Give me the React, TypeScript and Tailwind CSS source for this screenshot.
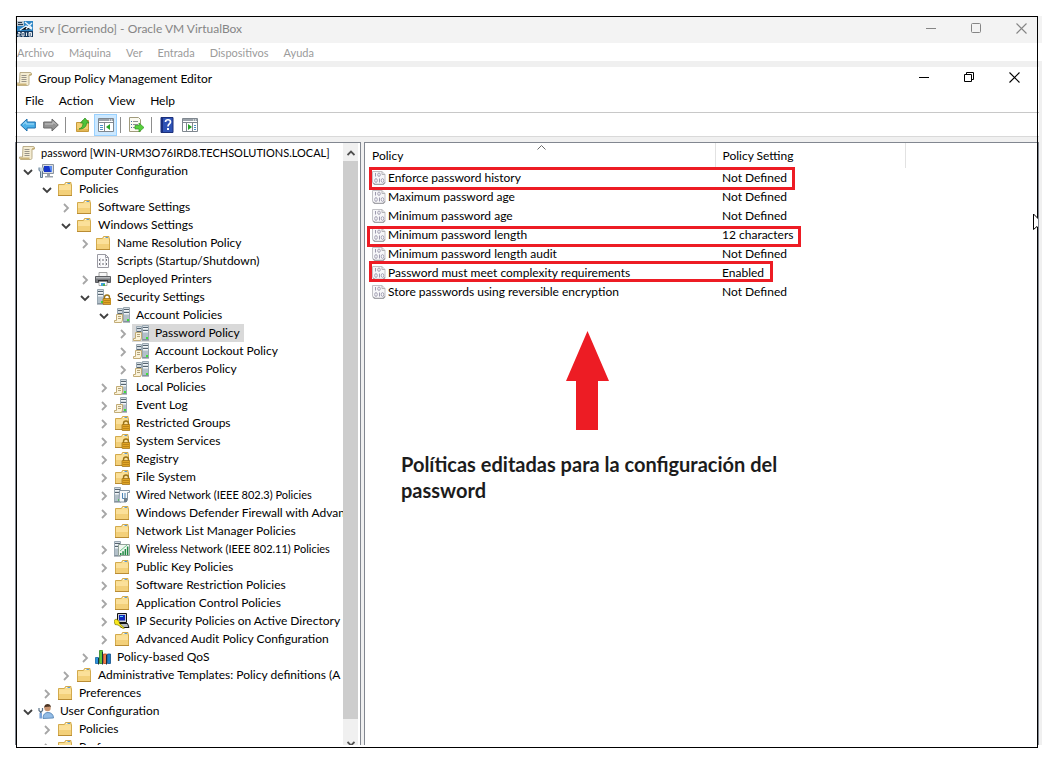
import React, { useState } from "react";

type IconName =
  | "scroll"
  | "computer"
  | "folder"
  | "script"
  | "printer"
  | "security"
  | "accounts"
  | "local"
  | "locked"
  | "wired"
  | "wireless"
  | "ipsec"
  | "qos"
  | "user";

type Node = {
  label: string;
  icon: IconName;
  state?: "open" | "closed";
  selected?: boolean;
  compact?: boolean;
  children?: Node[];
};

const tree: Node[] = [
  {
    label: "Computer Configuration",
    icon: "computer",
    state: "open",
    children: [
      {
        label: "Policies",
        icon: "folder",
        state: "open",
        children: [
          { label: "Software Settings", icon: "folder", state: "closed" },
          {
            label: "Windows Settings",
            icon: "folder",
            state: "open",
            children: [
              { label: "Name Resolution Policy", icon: "folder", state: "closed" },
              { label: "Scripts (Startup/Shutdown)", icon: "script" },
              { label: "Deployed Printers", icon: "printer", state: "closed" },
              {
                label: "Security Settings",
                icon: "security",
                state: "open",
                children: [
                  {
                    label: "Account Policies",
                    icon: "accounts",
                    state: "open",
                    children: [
                      { label: "Password Policy", icon: "accounts", state: "closed", selected: true },
                      { label: "Account Lockout Policy", icon: "accounts", state: "closed" },
                      { label: "Kerberos Policy", icon: "accounts", state: "closed" },
                    ],
                  },
                  { label: "Local Policies", icon: "local", state: "closed" },
                  { label: "Event Log", icon: "local", state: "closed" },
                  { label: "Restricted Groups", icon: "locked", state: "closed" },
                  { label: "System Services", icon: "locked", state: "closed" },
                  { label: "Registry", icon: "locked", state: "closed" },
                  { label: "File System", icon: "locked", state: "closed" },
                  { label: "Wired Network (IEEE 802.3) Policies", icon: "wired", state: "closed", compact: true },
                  { label: "Windows Defender Firewall with Advan", icon: "folder", state: "closed" },
                  { label: "Network List Manager Policies", icon: "folder" },
                  { label: "Wireless Network (IEEE 802.11) Policies", icon: "wireless", state: "closed", compact: true },
                  { label: "Public Key Policies", icon: "folder", state: "closed" },
                  { label: "Software Restriction Policies", icon: "folder", state: "closed" },
                  { label: "Application Control Policies", icon: "folder", state: "closed" },
                  { label: "IP Security Policies on Active Directory", icon: "ipsec", state: "closed" },
                  { label: "Advanced Audit Policy Configuration", icon: "folder", state: "closed" },
                ],
              },
              { label: "Policy-based QoS", icon: "qos", state: "closed" },
            ],
          },
          { label: "Administrative Templates: Policy definitions (A", icon: "folder", state: "closed" },
        ],
      },
      { label: "Preferences", icon: "folder", state: "closed" },
    ],
  },
  {
    label: "User Configuration",
    icon: "user",
    state: "open",
    children: [
      { label: "Policies", icon: "folder", state: "closed" },
      { label: "Preferences", icon: "folder", state: "closed" },
    ],
  },
];

const policies = [
  ["Enforce password history", "Not Defined"],
  ["Maximum password age", "Not Defined"],
  ["Minimum password age", "Not Defined"],
  ["Minimum password length", "12 characters"],
  ["Minimum password length audit", "Not Defined"],
  ["Password must meet complexity requirements", "Enabled"],
  ["Store passwords using reversible encryption", "Not Defined"],
];

const FolderShape = () => (
  <>
    <path d="M1.500 3.500h6l1-2h5.500v2h.5v11h-13z" fill="#f8dc8c" stroke="#d3aa4c" />
    <path d="M2 4.500h12V9H2z" fill="#fbe09a" />
    <path d="M2 9h12v5H2z" fill="#f3d07a" />
    <path d="M9 2.500h4" stroke="#fff7df" />
    <path d="M10.500 2.500h2.500" stroke="#5b9bd5" />
    <path d="M1 14.500h14" stroke="#b98c34" />
  </>
);

const Lock = () => (
  <>
    <path d="M9.500 10V8.500a2.500 2.500 0 0 1 5 0V10" fill="none" stroke="#9a7418" strokeWidth="1.400" />
    <rect x="8" y="9.500" width="8" height="6" rx=".6" fill="#e0a526" stroke="#9a6a10" strokeWidth=".7" />
    <path d="M9 11.500h6M9 13.500h6" stroke="#b47c14" strokeWidth=".8" />
  </>
);

const Server = ({ x }: { x: number }) => (
  <g transform={`translate(${x} 0)`}>
    <path d="M.5.5h6v14h-6z" fill="#d3dbe1" stroke="#9aa8b2" />
    <path d="M1 2.500h5M1 5.500h5" stroke="#566470" />
    <path d="M1 3.500h5M1 6.500h5" stroke="#f2f6f8" />
    <path d="M1 8h5v6H1z" fill="#b3c0c9" />
    <path d="M0 15h7" stroke="#6f7d88" />
    <path d="M4 12h2v2H4z" fill="#3ce03a" />
  </g>
);

const MiniScroll = () => (
  <>
    <path d="M2.500 7.500h6v5.500l-1 2.500h-7v-2h2z" fill="#fbf3da" stroke="#c2ac76" />
    <path d="M4 9.500h3M4 11.500h3" stroke="#b3a47c" />
  </>
);

function Icon({ name }: { name: IconName }) {
  let art: React.ReactNode = null;
  switch (name) {
    case "scroll":
      art = (
        <>
          <path d="M4 1.500h10.500c.8 0 1 .8 1 1.500v1H13v8.500c0 1.500-.5 2-1.500 2H2c-1 0-1.500-1-1.500-2.500h3z" fill="#f4ecd2" stroke="#b3a680" strokeWidth=".9" />
          <path d="M13 4h2V2.500" stroke="#c2a96a" fill="#d8c48c" />
          <path d="M1 12.500h9.500v2H2c-.7 0-1-.8-1-2z" fill="#cbb47a" />
          <path d="M5.500 4.500h5M5.500 6.500h5M5.500 8.500h5M5.500 10.500h5" stroke="#8f8a80" strokeWidth=".9" />
        </>
      );
      break;
    case "computer":
      art = (
        <>
          <path d="M4.500 1.500h11v9h-11z" fill="#d9dde2" stroke="#8b949e" />
          <path d="M6 3h8v6H6z" fill="#1636c9" />
          <path d="M11 3h3v6h-1z" fill="#5b8cf0" />
          <path d="M9 11h3v2H9zM7 13h8v1.500H7z" fill="#9aa3ad" />
          <path d="M1 4.500v3l1.500 1v6h2v-6l1-1v-3" fill="#c7d6e2" stroke="#5d7890" />
        </>
      );
      break;
    case "folder":
      art = <FolderShape />;
      break;
    case "script":
      art = (
        <>
          <path d="M2.500 1.500h8l3 3v10h-11z" fill="#fbfbfd" stroke="#9a9aa2" />
          <path d="M10.500 1.500v3h3" fill="none" stroke="#9a9aa2" />
          <path d="M5.500 6l-1.500 1 1.500 1M10.500 6L12 7l-1.500 1M7 7h2M5.500 10L4 11l1.500 1M10.500 10l1.500 1-1.500 1M7 11h2" fill="none" stroke="#55555f" strokeWidth=".9" />
        </>
      );
      break;
    case "printer":
      art = (
        <>
          <path d="M4 1.500h8V6H4z" fill="#f7f7f7" stroke="#8d8d8d" strokeWidth=".8" />
          <path d="M0.500 5.500h15v6h-15z" fill="#77797d" stroke="#5d5f63" />
          <path d="M1 6h14v1.500H1z" fill="#b6b8bb" />
          <path d="M3 9h10v2H3z" fill="#2d2e31" />
          <path d="M4 10.500h8v4H4z" fill="#fff" stroke="#8d8d8d" strokeWidth=".7" />
          <path d="M6 12h4v3H6z" fill="#42a3dc" />
          <path d="M8 13h2v2H8z" fill="#4caf50" />
        </>
      );
      break;
    case "security":
      art = (
        <>
          <Server x={2} />
          <Lock />
        </>
      );
      break;
    case "accounts":
      art = (
        <>
          <path d="M3.500 1.500h5v11h-5z" fill="#d3dbe1" stroke="#9aa8b2" />
          <path d="M4 3.500h4M4 6.500h4" stroke="#566470" />
          <Server x={9} />
          <MiniScroll />
        </>
      );
      break;
    case "local":
      art = (
        <>
          <Server x={6} />
          <MiniScroll />
        </>
      );
      break;
    case "locked":
      art = (
        <>
          <FolderShape />
          <Lock />
        </>
      );
      break;
    case "wired":
      art = (
        <>
          <Server x={0} />
          <path d="M5.500 3.500h10v2h-2v7.500l-1.500 2H6.500l-1.500-1z" fill="#f6f8fa" stroke="#8494a2" />
          <path d="M8.500 6v5.500M8.500 11.500h2.500M11 6v5.500" stroke="#4d85b5" fill="none" />
          <path d="M10 11h3v4h-3z" fill="#6f7f8b" />
        </>
      );
      break;
    case "wireless":
      art = (
        <>
          <Server x={0} />
          <path d="M4.500 3.500h11v11h-11z" fill="#f0f6f0" stroke="#93a39a" />
          <path d="M6 12h1.500v2H6zM8.300 10.300h1.500V14H8.300zM10.600 8h1.500v6h-1.500zM12.900 5.500h1.500V14h-1.500z" fill="#1f8a44" />
          <path d="M6 10l7-6" stroke="#6fc38a" />
        </>
      );
      break;
    case "ipsec":
      art = (
        <>
          <path d="M3.500.5h9v9h-9z" fill="#c9ccd2" stroke="#111" />
          <path d="M5 2h6v5.500H5z" fill="#1028b8" />
          <path d="M6 3h3v1H6z" fill="#4ad2ff" />
          <path d="M5 10.500h8.500l1.500 4H7z" fill="#b4b8bf" stroke="#111" />
          <path d="M0 7.500l2-1.500 3 2 .5 2.500 5 4.500-1.500.5-5-3.500-3-.5z" fill="#f8e81c" stroke="#6b6400" strokeWidth=".6" />
        </>
      );
      break;
    case "qos":
      art = (
        <>
          <path d="M.5 8.500h3v6h-3z" fill="#2f93dc" stroke="#1767a5" strokeWidth=".8" />
          <path d="M4.500 1.500h3v13h-3z" fill="#62c83e" stroke="#2d8420" strokeWidth=".8" />
          <path d="M8.500 5h3v9.500h-3z" fill="#f07a48" stroke="#b0441c" strokeWidth=".8" />
          <path d="M12.500 5h3v9.500h-3z" fill="#1d7cc9" stroke="#0f4f8a" strokeWidth=".8" />
          <path d="M3.500 9v6.500M7.500 3v12.500M11.500 6v9.500" stroke="#12303f" />
        </>
      );
      break;
    case "user":
      art = (
        <>
          <path d="M5 15.500c0-4 2-6 5-6s5.500 2 5.500 5.500z" fill="#93bce6" stroke="#4f7fb0" strokeWidth=".8" />
          <circle cx="9.500" cy="5" r="3.200" fill="#c99470" />
          <path d="M6.300 5c-.6-5 6.700-5.500 6.700-.5l-1-1c-2 .5-4 .3-5 .5z" fill="#4c3524" />
          <path d="M1 5v2.500L2.500 9v6M4.500 5v2.500L3 9v6" fill="none" stroke="#5c7388" strokeWidth="1.200" />
          <path d="M1.500 10h2.500v5.500H1.500z" fill="#7aa2d8" />
        </>
      );
      break;
  }
  return (
    <svg viewBox="0 0 16 16" className="size-4 shrink-0" aria-hidden="true">
      {art}
    </svg>
  );
}

function Chevron({ state }: { state?: "open" | "closed" }) {
  if (!state) return <span className="w-[19px] shrink-0" />;
  return (
    <button aria-label={state === "open" ? "Collapse" : "Expand"} className="flex w-[19px] shrink-0 items-center justify-start pl-1">
      <svg viewBox="0 0 10 10" className="mt-px size-[10px]" fill="none" strokeWidth="1.800" aria-hidden="true">
        {state === "open" ? (
          <path d="M1 3l4 4 4-4" stroke="#404040" />
        ) : (
          <path d="M3 1l4 4-4 4" stroke="#a6a6a6" />
        )}
      </svg>
    </button>
  );
}

function TreeItem({ node }: { node: Node }) {
  return (
    <li role="treeitem" aria-selected={!!node.selected}>
      <div className={`flex h-[18px] whitespace-nowrap ${node.compact ? "text-[11px]" : ""}`}>
        <Chevron state={node.state} />
        <span className={`-ml-px flex items-center gap-[6px] pl-px ${node.selected ? "bg-[#d9d9d9] pr-1" : ""}`}>
          <Icon name={node.icon} />
          {node.label}
        </span>
      </div>
      {node.children && (
        <ul role="group" className="pl-[19px]">
          {node.children.map((c) => (
            <TreeItem key={c.label} node={c} />
          ))}
        </ul>
      )}
    </li>
  );
}

function WindowButtons({ restore }: { restore?: boolean }) {
  const b = "flex h-full w-[42px] items-center justify-center";
  return (
    <div className="ml-auto flex h-full gap-[3px] pb-0.5">
      <button aria-label="Minimize" className={b}>
        <svg viewBox="0 0 11 11" className="size-[11px]" stroke="currentColor" aria-hidden="true">
          <path d="M0 5.500h10" />
        </svg>
      </button>
      <button aria-label={restore ? "Restore" : "Maximize"} className={b}>
        <svg viewBox="0 0 11 11" className="size-[11px]" stroke="currentColor" fill="none" aria-hidden="true">
          {restore ? <path d="M.5 2.500h7v7h-7zM2.500 2.500v-2h7v7h-2" /> : <rect x=".5" y=".5" width="9" height="9" rx="1" />}
        </svg>
      </button>
      <button aria-label="Close" className={b}>
        <svg viewBox="0 0 11 11" className="size-[11px]" stroke="currentColor" strokeWidth="1.100" aria-hidden="true">
          <path d="M.5.5l10 10M10.500.5l-10 10" />
        </svg>
      </button>
    </div>
  );
}

const WindowGlyph = ({ arrow }: { arrow: "left" | "right" }) => (
  <>
    <path d="M.5 1.500h15v13H.5z" fill="#fff" stroke="#7f878f" />
    <path d="M1 2h14v2H1z" fill="#9aa2aa" />
    <path d="M11 3h1M13 3h1" stroke="#fff" />
    <path d="M1 5.500h14" stroke="#7f878f" />
    {arrow === "left" ? (
      <>
        <path d="M6.500 6v8" stroke="#7f878f" />
        <path d="M2 8.500h3M2 10.500h3M2 12.500h3" stroke="#4a90c8" />
        <path d="M12 7v6l-4-3z" fill="#2aa52a" />
      </>
    ) : (
      <>
        <path d="M4.500 6v8M10.500 6v8" stroke="#7f878f" />
        <path d="M12 8.500h2M12 10.500h2M12 12.500h2" stroke="#4a90c8" />
        <path d="M6 7v6l4-3z" fill="#2aa52a" />
      </>
    )}
  </>
);

function Tool({ label, active, children }: { label: string; active?: boolean; children: React.ReactNode }) {
  return (
    <button
      aria-label={label}
      className={`flex h-[22px] w-[23px] items-center justify-center ${active ? "border border-[#99d1ff] bg-[#cce8ff]" : ""}`}
    >
      <svg viewBox="0 0 16 16" className="mt-px size-4 shrink-0" aria-hidden="true">
        {children}
      </svg>
    </button>
  );
}

const Divider = () => <span className="mx-[3px] h-4 w-px bg-[#8d8d8d]" />;

const PolicyIcon = () => (
  <svg viewBox="0 0 14 14" className="size-[14px] shrink-0" fill="none" aria-hidden="true">
    <path d="M.5.5h9.500l3 3v8.500l-2 1.500H3L.5 11.500z" fill="#f6f6f8" stroke="#c2c2c6" />
    <path d="M10 .5v3h3" stroke="#b3b3b7" />
    <path d="M1 12l2 1.500h8l2-2" stroke="#a2a2a7" strokeWidth="1.300" />
    <path d="M3.500 2v3.500M7.500 7.500v4" stroke="#9d9aae" />
    <ellipse cx="7" cy="3.700" rx="1.300" ry="1.700" stroke="#9d9aae" strokeWidth=".9" />
    <ellipse cx="4" cy="9.500" rx="1.300" ry="1.900" stroke="#9d9aae" strokeWidth=".9" />
    <ellipse cx="10.500" cy="9.500" rx="1.300" ry="1.900" stroke="#9d9aae" strokeWidth=".9" />
  </svg>
);

export default function App() {
  const [menu] = useState(["File", "Action", "View", "Help"]);
  return (
    <div className="relative flex h-screen flex-col overflow-hidden bg-white pt-4 pr-[13px] pb-[19px] pl-[15px] font-['Lato','Open_Sans',sans-serif] text-[12px] leading-[18px] text-black">
      <header className="flex h-[27px] shrink-0 items-center bg-[#f3f3f3] text-[#858585]">
        <svg viewBox="0 0 16 16" className="mb-0.5 ml-0.5 size-4" aria-hidden="true">
          <path d="M0 0h16v16H0z" fill="#2f86c4" />
          <path d="M0 0h7v5H0z" fill="#b9c7d2" />
          <path d="M1 1.500h4M1 3.500h5" stroke="#27384a" />
          <path d="M8 1l7 6M9 8l6-6M3 9l6-4 6 3" stroke="#e9f5ff" strokeWidth="1.400" />
          <path d="M0 10h16v6H0z" fill="#14395f" />
          <path d="M1 11.500h2v1.500H1v2h2.500M5 11.500h2v3.500H5zM9.500 11.500V15M12 11.500h2.500v3.500H12zM12 13h2.500" fill="none" stroke="#fff" strokeWidth=".9" />
        </svg>
        <span className="ml-[6px] pb-0.5">srv [Corriendo] - Oracle VM VirtualBox</span>
        <WindowButtons />
      </header>
      <nav className="flex h-[18px] shrink-0 items-center gap-[15px] pt-0.5 pl-0.5 text-[11px] text-[#9b9b9b]">
        {["Archivo", "Máquina", "Ver", "Entrada", "Dispositivos", "Ayuda"].map((m) => (
          <button key={m}>{m}</button>
        ))}
      </nav>

      <div className="flex min-h-0 grow flex-col bg-[#f0f0f0] pt-[6px] pr-[3px]">
        <div className="flex h-[23px] shrink-0 items-center bg-white pr-1">
          <span className="ml-px flex">
            <Icon name="scroll" />
          </span>
          <h1 className="ml-[6px]">Group Policy Management Editor</h1>
          <WindowButtons restore />
        </div>
        <nav className="flex h-[23px] shrink-0 items-center gap-[15px] border-b border-[#c8c8c8] bg-white pl-[10px]">
          {menu.map((m) => (
            <button key={m}>{m}</button>
          ))}
        </nav>
        <div role="toolbar" className="flex h-6 shrink-0 items-center border-b border-[#d9d9d9] bg-white pl-px">
          <Tool label="Back">
            <path d="M.7 8L7 2v3h8.300v6H7v3z" fill="#4db1e8" stroke="#1c6fae" />
            <path d="M3 7.500l3-2.900V7h8" stroke="#a9def8" fill="none" />
          </Tool>
          <Tool label="Forward">
            <path d="M15.300 8L9 2v3H.7v6H9v3z" fill="#939393" stroke="#6b6b6b" />
            <path d="M2 7h8V4.600l3 3" stroke="#c4c4c4" fill="none" />
          </Tool>
          <Divider />
          <span className="w-0.5" />
          <Tool label="Up one level">
            <path d="M1.500 5.500h5l1-2h6v11h-12z" fill="#f3cf73" stroke="#c79a3b" />
            <path d="M2 12h11v2H2z" fill="#e2b654" />
            <path d="M4 12c3-1 4-3 4-6H5.500L10 1l4 5h-2.500c0 4-3 6-7.500 6z" fill="#4fc33a" stroke="#2b8a1e" strokeWidth=".7" />
          </Tool>
          <Tool label="Show or hide console tree" active>
            <WindowGlyph arrow="left" />
          </Tool>
          <Divider />
          <Tool label="Export list">
            <path d="M1.500.5h9l2 2v12h-11z" fill="#fbfaf0" stroke="#a19b7c" />
            <path d="M3 4.500h1M3 7.500h1M3 10.500h1" stroke="#3d6f9e" />
            <path d="M5 4.500h5M5 7.500h5M5 10.500h3" stroke="#8f8f8f" />
            <path d="M7 8.500h4V6l5 4.500-5 4.500v-3H7z" fill="#57cf3c" stroke="#2f9a20" strokeWidth=".7" />
          </Tool>
          <span className="w-px" />
          <Divider />
          <Tool label="Help">
            <path d="M2 .5h12v15H2z" fill="#2f53b5" stroke="#1b2f7a" />
            <path d="M2 1h2v14H2z" fill="#1a2f80" />
            <path d="M6.500 5c0-3 5-3 5 0 0 2-2.500 2-2.500 4.500" fill="none" stroke="#fff" strokeWidth="1.700" />
            <path d="M8 11h2v2H8z" fill="#fff" />
          </Tool>
          <Tool label="Show or hide action pane">
            <WindowGlyph arrow="right" />
          </Tool>
        </div>

        <main className="mt-[5px] flex min-h-0 grow gap-[3px]">
          <section className="flex w-[346px] shrink-0 border border-b-0 border-[#828790] bg-white pr-0.5">
            <div className="min-w-0 grow overflow-hidden pt-px pl-[3px]">
              <div className="flex h-[18px] items-center gap-[6px] text-[11px] whitespace-nowrap">
                <Icon name="scroll" />
                password [WIN-URM3O76IRD8.TECHSOLUTIONS.LOCAL]
              </div>
              <ul role="tree">
                {tree.map((n) => (
                  <TreeItem key={n.label} node={n} />
                ))}
              </ul>
            </div>
            <div className="flex w-[15px] shrink-0 flex-col overflow-hidden bg-[#f0f0f0]">
              <button aria-label="Scroll up" className="flex h-[18px] shrink-0 items-center justify-center">
                <svg viewBox="0 0 8 6" className="mt-0.5 h-[6px] w-2" fill="none" stroke="#505050" strokeWidth="1.800" aria-hidden="true">
                  <path d="M.5 5L4 1.500 7.500 5" />
                </svg>
              </button>
              <div className="grow bg-[#cdcdcd]" />
              <div className="h-[22px] shrink-0" />
              <button aria-label="Scroll down" className="flex h-1 shrink-0 justify-center overflow-hidden">
                <svg viewBox="0 0 8 6" className="h-[6px] w-2 shrink-0" fill="none" stroke="#505050" strokeWidth="1.800" aria-hidden="true">
                  <path d="M.5 1L4 4.500 7.500 1" />
                </svg>
              </button>
            </div>
          </section>

          <section className="relative min-w-0 grow border border-b-0 border-[#828790] bg-white">
            <table className="w-full table-fixed border-collapse text-left">
              <colgroup>
                <col className="w-[350px]" />
                <col className="w-[190px]" />
                <col />
              </colgroup>
              <thead>
                <tr className="h-[25px]">
                  <th className="border-r border-[#e2e2e2] p-0 pl-[7px] font-normal">Policy</th>
                  <th className="border-r border-[#e2e2e2] p-0 pl-[7px] font-normal">Policy Setting</th>
                  <th className="p-0" />
                </tr>
              </thead>
              <tbody>
                {policies.map(([name, setting]) => (
                  <tr key={name} className="h-[19px]">
                    <td className="p-0 pl-[7px]">
                      <span className="flex items-center gap-[2px]">
                        <PolicyIcon />
                        {name}
                      </span>
                    </td>
                    <td className="p-0 pl-[7px]">{setting}</td>
                    <td className="p-0" />
                  </tr>
                ))}
              </tbody>
            </table>

            <svg viewBox="0 0 9 5" className="absolute top-[2px] left-[172px] h-[5px] w-[9px]" fill="none" stroke="#6a6a6a" aria-hidden="true">
              <path d="M.5 4.500l4-4 4 4" />
            </svg>
            <div className="absolute top-[24px] left-[4px] h-[23px] w-[426px] border-3 border-[#ed1c24]" />
            <div className="absolute top-[83px] left-[2px] h-[21px] w-[434px] border-3 border-[#ed1c24]" />
            <div className="absolute top-[118px] left-[4px] h-[21px] w-[404px] border-3 border-[#ed1c24]" />

            <figure className="absolute top-[188px] left-[36px] w-[400px]">
              <svg viewBox="0 0 43 99" className="ml-[165px] h-[99px] w-[43px]" fill="#ed1c24" aria-hidden="true">
                <path d="M21.500 0L43 50H32v49H10V50H0z" />
              </svg>
              <figcaption className="mt-[21px] font-['Lato',sans-serif] text-[20px] leading-[26px] font-bold text-[#1c1c1c]">
                Políticas editadas para la configuración del password
              </figcaption>
            </figure>
          </section>
        </main>
      </div>

      <div className="pointer-events-none absolute top-4 right-[17px] bottom-4 left-4 border border-black" />
      <svg viewBox="0 0 5 19" className="absolute top-[213px] right-[17px] h-[19px] w-[5px]" fill="#fff" stroke="#000" aria-hidden="true">
        <path d="M5.500 6L.5 1v15.500L4 13.500l2 4" />
      </svg>
    </div>
  );
}
